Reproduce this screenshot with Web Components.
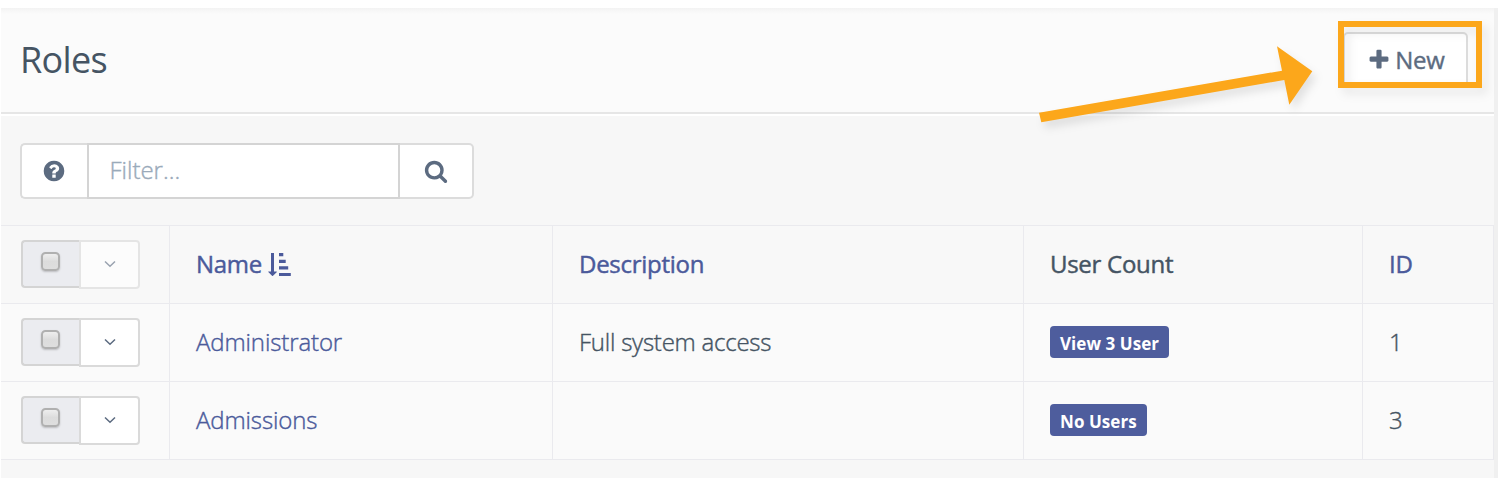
<!DOCTYPE html>
<html lang="en">
<head>
<meta charset="utf-8">
<title>Roles</title>
<style>
html,body{margin:0;background:#fff;overflow:hidden}
body{width:1512px;height:478px;font-family:"Open Sans",sans-serif;color:#455463;font-size:24px}
</style>
</head>
<body>
<roles-page></roles-page>
<script>
const define = (name, html, setup) => {
  const t = document.createElement('template');
  t.innerHTML = html;
  customElements.define(name, class extends HTMLElement {
    constructor() {
      super();
      this.attachShadow({mode: 'open'}).append(t.content.cloneNode(true));
    }
    connectedCallback() { if (setup) setup(this); }
  });
};

const ICONS = {
  plus: 'M1600 736v192q0 40-28 68t-68 28h-416v416q0 40-28 68t-68 28h-192q-40 0-68-28t-28-68v-416h-416q-40 0-68-28t-28-68v-192q0-40 28-68t68-28h416v-416q0-40 28-68t68-28h192q40 0 68 28t28 68v416h416q40 0 68 28t28 68z',
  search: 'M1216 832q0-185-131.5-316.5t-316.5-131.5-316.5 131.5-131.5 316.5 131.5 316.5 316.5 131.5 316.5-131.5 131.5-316.5zm512 832q0 52-38 90t-90 38q-54 0-90-38l-343-342q-179 124-399 124-143 0-273.5-55.5t-225-150-150-225-55.5-273.5 55.5-273.5 150-225 225-150 273.5-55.5 273.5 55.5 225 150 150 225 55.5 273.5q0 220-124 399l343 343q37 37 37 90z',
  help: 'M1024 1376v-192q0-14-9-23t-23-9h-192q-14 0-23 9t-9 23v192q0 14 9 23t23 9h192q14 0 23-9t9-23zm256-672q0-88-55.5-163t-138.5-116-170-41q-243 0-371 213-15 24 8 42l132 100q7 6 19 6 16 0 25-12 53-68 86-92 34-24 86-24 48 0 85.5 26t37.5 59q0 38-20 61t-68 45q-63 28-115.5 86.5t-52.5 125.5v36q0 14 9 23t23 9h192q14 0 23-9t9-23q0-19 21.5-49.5t54.5-49.5q32-18 49-28.5t46-35 44.5-48 28-60.5 12.5-81zm384 192q0 209-103 385.5t-279.5 279.5-385.5 103-385.5-103-279.5-279.5-103-385.5 103-385.5 279.5-279.5 385.5-103 385.5 103 279.5 279.5 103 385.5z'
};

define('ui-icon', `<style>:host{display:block;width:24px;height:24px;flex:none}svg{display:block;width:100%;height:100%;fill:currentColor}</style>
<svg viewBox="0 0 1792 1792"><path stroke="none"/></svg>`,
  el => el.shadowRoot.querySelector('path').setAttribute('d', ICONS[el.getAttribute('name')]));

define('sort-icon', `<style>:host{display:block;width:24px;height:24px;flex:none;margin-top:3px}svg{display:block;fill:currentColor}</style>
<svg width="24" height="24" viewBox="0 0 24 24"><path d="M3 0h3v18.4h2.4q.8 0 .3.8l-3.7 3.6q-.5.4-1 0l-3.7-3.7q-.5-.7.4-.7H3zM11 0h4.3v3.2H11zM11 6.7h6.7v3.2H11zM11 13.2h9.2v3.2H11zM11 19.9h11.8v3.2H11z"/></svg>`);

define('tool-button', `<style>
:host{display:flex;box-sizing:border-box;height:56px;align-items:center;justify-content:center;background:#fff;border:2px solid #dcdcdc;color:#5c6b80}
:host([wide]){border-radius:5px;width:125px;gap:4px;padding:0 0 2px 1px;letter-spacing:-.2px;-webkit-text-stroke:.4px currentColor}
</style><slot></slot>`);

define('page-header', `<style>
:host{display:flex;box-sizing:border-box;height:108px;padding:24px 26px 0 19px;justify-content:space-between;align-items:flex-start;border-bottom:2px solid #fff;background:linear-gradient(#f3f3f3,#fbfbfb 6px,#fbfbfb 104px,#e6e6e6 104px)}
h1{margin:4px 0 0;font-weight:400;font-size:36px;line-height:48px;letter-spacing:-.65px}
</style><h1><slot></slot></h1><slot name="action"></slot>`);

define('filter-bar', `<style>
:host{display:flex;padding:27px 0 26px 19px;height:56px}
.help{width:67px;border-right:0;border-radius:5px 0 0 5px;padding-right:1px}
.search{width:74px;border-left:0;border-radius:0 5px 5px 0}
.input{box-sizing:border-box;width:313px;height:56px;border:2px solid #d4d4d4;background:#fff;padding-left:20.5px;line-height:50px;color:#9aaaba;font-weight:300;-webkit-text-stroke:.4px currentColor}
</style><tool-button class="help"><ui-icon name="help"></ui-icon></tool-button><div class="input"><slot></slot></div><tool-button class="search"><ui-icon name="search"></ui-icon></tool-button>`);

define('row-select', `<style>
:host{display:flex;align-items:flex-start;width:119px;height:49px}
:host([muted]) .menu{opacity:.6}
.check{box-sizing:border-box;width:58px;height:48px;border:2px solid #d4d4d4;border-right:0;border-radius:4px 0 0 4px;background:#ebecf0;padding:10px 0 0 18px}
.box{box-sizing:border-box;width:19px;height:19px;border:2px solid #b0b0b0;border-radius:4.5px;background:linear-gradient(#eee,#dcdcdc 50%,#dedede);box-shadow:0 1px 2px #0003}
.menu{box-sizing:border-box;width:61px;height:49px;border:2px solid #dadada;border-radius:0 4px 4px 0;background:#fff;display:flex;align-items:center;justify-content:center}
svg{fill:none;stroke:#5c6b80;stroke-width:1.5;display:block}
</style><div class="check"><div class="box"></div></div><div class="menu"><svg width="12" height="8" viewBox="0 0 12 8"><path d="M1 1.5L6 6.3L11 1.5"/></svg></div>`);

define('count-badge', `<style>
:host{display:block;box-sizing:border-box;height:32px;padding:0 10px;border-radius:4px;background:#4e5d9d;color:#fff;font-size:17px;font-weight:700;line-height:36px;letter-spacing:.06px;white-space:nowrap}
</style><slot></slot>`);

define('table-cell', `<style>
:host{display:flex;align-items:center;box-sizing:border-box;border-right:1px solid #eaeaee;padding:0 0 2px 26px;white-space:nowrap;min-width:0}
:host([select]){padding:0 0 1px 20px}
:host([badge]){padding:0 0 1px 26px}
:host([link]){color:#4b5a9b}
</style><slot></slot>`);

define('table-row', `<style>
:host{display:grid;box-sizing:border-box;grid-template-columns:169px 383px 471px 339px 131px;height:78px;border-bottom:1px solid #eaeaee;background:#fafafa;font-weight:300;letter-spacing:-.12px;-webkit-text-stroke:.4px currentColor}
:host([head]){background:#f8f8f8;font-weight:400;letter-spacing:-.28px;-webkit-text-stroke:.45px currentColor}
::slotted([badge]){-webkit-text-stroke:0}
</style><slot></slot>`);

define('arrow-callout', `<style>:host{position:absolute;left:0;top:0;width:1512px;height:140px}
svg{display:block;filter:drop-shadow(4px 6px 4px #0000001a)}
.frame{position:absolute;box-sizing:border-box;left:1338px;top:21px;width:144px;height:67px;border:6px solid #fca71b;filter:drop-shadow(5px 6px 5px #00000014)}
</style><svg width="1512" height="140"><path fill="#fca71b" d="M1039 112.7L1282 70.7L1277 46.3L1312.3 71.3L1289.3 104.7L1284.3 80L1041.3 122.2z"/></svg><div class="frame"></div>`);

define('roles-page', `<style>
:host{display:block;position:relative;box-sizing:border-box;width:1512px;height:478px;padding:8px 14px 0 1px}
.panel{box-sizing:border-box;height:470px;width:1497px;border-right:4px solid #f0f0f0;background:#f7f7f7}
.table{border-top:1px solid #eaeaee}
.mid{display:flex;align-items:center;gap:6px}
.tight{letter-spacing:-.23px}
.plus{margin-top:2px}
</style>
<div class="panel">
<page-header>Roles<tool-button wide slot="action"><ui-icon class="plus" name="plus"></ui-icon><span>New</span></tool-button></page-header>
<filter-bar>Filter...</filter-bar>
<div class="table">
<table-row head><table-cell select><row-select muted></row-select></table-cell><table-cell link><span class="mid"><span>Name</span><sort-icon></sort-icon></span></table-cell><table-cell link><span>Description</span></table-cell><table-cell><span>User Count</span></table-cell><table-cell link><span>ID</span></table-cell></table-row>
<table-row><table-cell select><row-select></row-select></table-cell><table-cell link><span>Administrator</span></table-cell><table-cell><span class="tight">Full system access</span></table-cell><table-cell badge><count-badge>View 3 User</count-badge></table-cell><table-cell><span>1</span></table-cell></table-row>
<table-row><table-cell select><row-select></row-select></table-cell><table-cell link><span>Admissions</span></table-cell><table-cell></table-cell><table-cell badge><count-badge>No Users</count-badge></table-cell><table-cell><span>3</span></table-cell></table-row>
</div>
</div>
<arrow-callout></arrow-callout>`);
</script>
</body>
</html>
